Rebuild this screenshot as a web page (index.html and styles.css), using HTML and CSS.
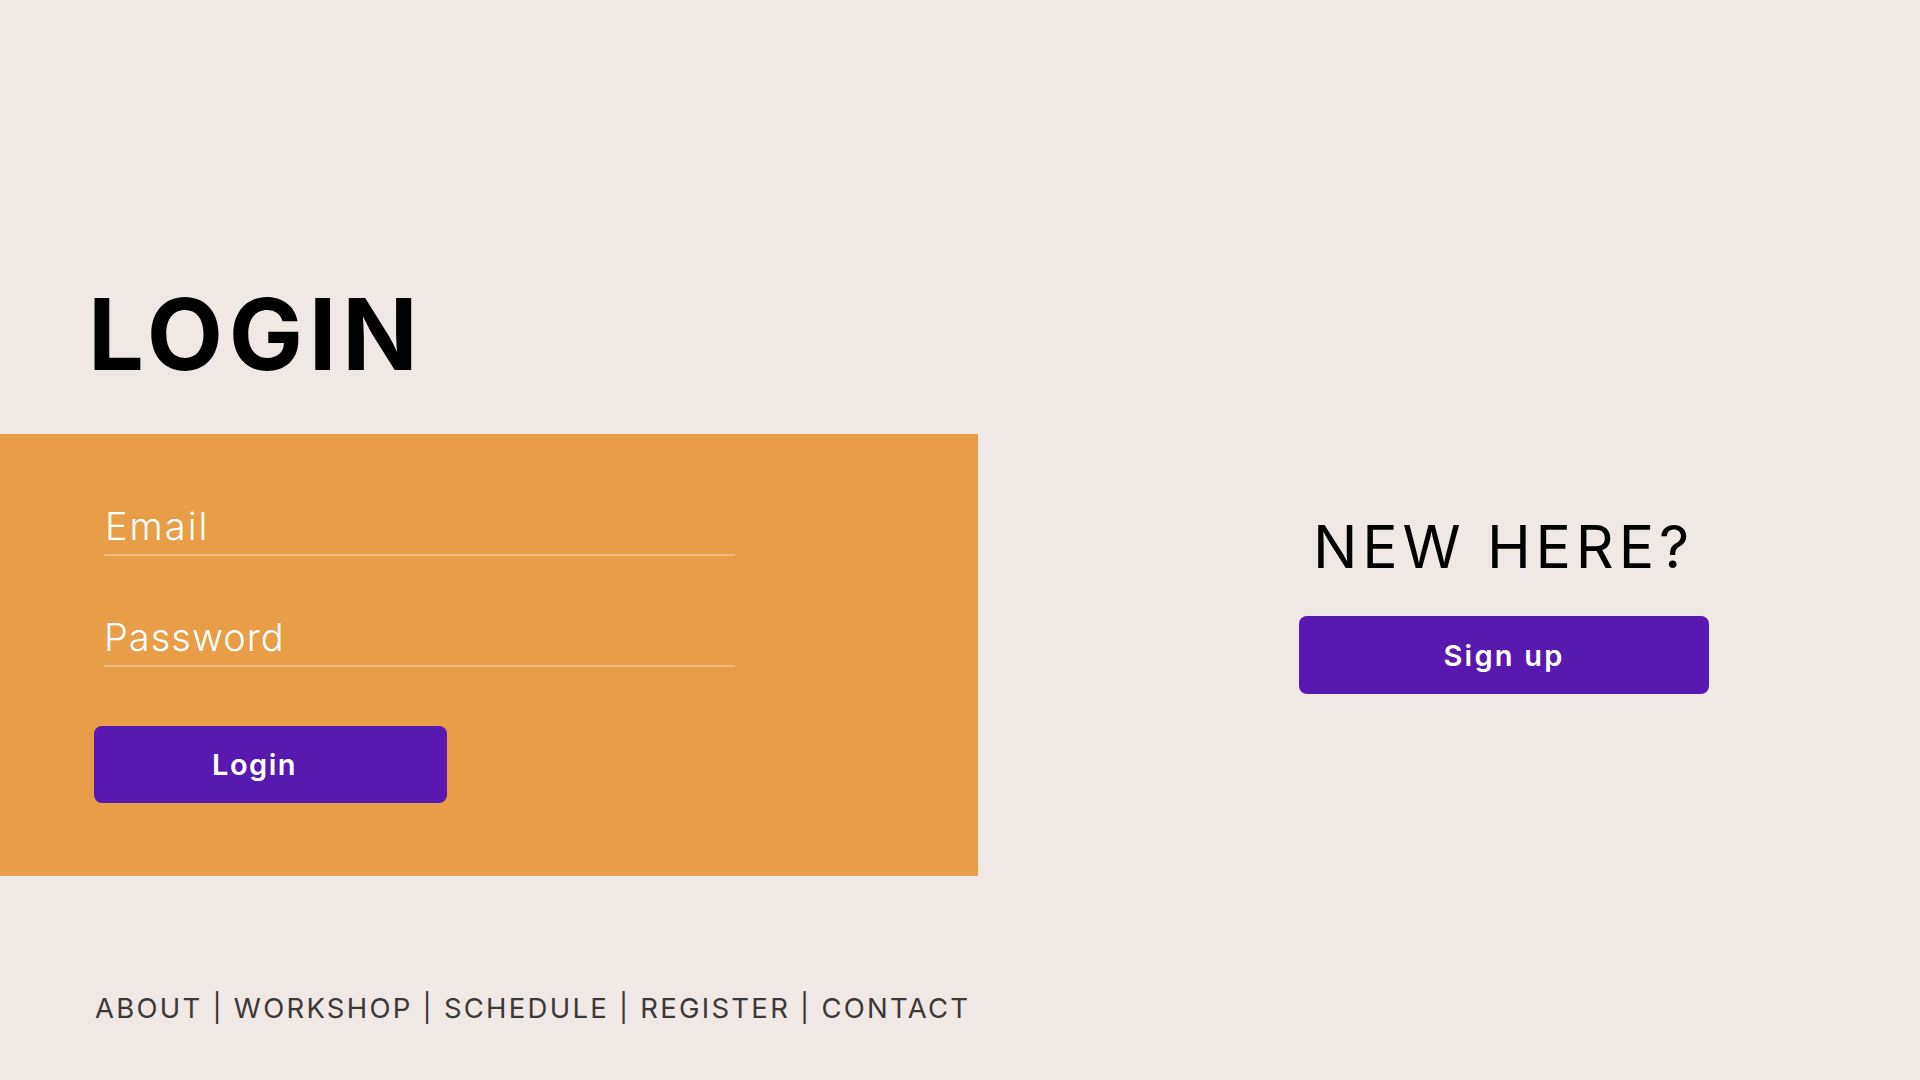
FILE: index.html
```html
<!DOCTYPE html>
<html lang="en">
<head>
<meta charset="utf-8">
<title>Login</title>
<link rel="stylesheet" href="styles.css">
</head>
<body>
<div class="page">
  <header class="header">
    <h1 class="title">LOGIN</h1>
  </header>
  <main class="main">
    <form class="panel">
      <input class="field field-email" type="text" placeholder="Email">
      <input class="field field-password" type="password" placeholder="Password">
      <button class="btn btn-login" type="button">Login</button>
    </form>
    <section class="aside">
      <h2 class="new-here">NEW HERE?</h2>
      <button class="btn btn-signup" type="button">Sign up</button>
    </section>
  </main>
  <footer class="footer">
    <nav class="nav">ABOUT | WORKSHOP | SCHEDULE | REGISTER | CONTACT</nav>
  </footer>
</div>
</body>
</html>
```
FILE: styles.css
```css
* { box-sizing: border-box; }
html, body { margin: 0; padding: 0; }
body {
  background: #f0e8e5;
  font-family: Inter, "Liberation Sans", sans-serif;
  color: #000;
}
.page {
  width: 1920px;
  height: 1080px;
  display: flex;
  flex-direction: column;
}
.header {
  height: 434px;
  display: flex;
  align-items: flex-start;
  padding: 284px 0 0 88px;
}
.title {
  margin: 0;
  font-size: 99px;
  line-height: 100px;
  font-weight: 700;
  letter-spacing: 5.7px;
}
.main {
  height: 442px;
  display: flex;
}
.panel {
  width: 978px;
  background: #e89d47;
  display: flex;
  flex-direction: column;
  align-items: flex-start;
  padding: 66px 0 0 104px;
}
.field {
  width: 631px;
  height: 56px;
  background: transparent;
  border: none;
  border-bottom: 2px solid rgba(255, 255, 255, 0.3);
  outline: none;
  padding: 0 0 3px 1px;
  font-family: inherit;
  font-size: 38px;
  font-weight: 300;
  color: #fff;
  letter-spacing: 1.4px;
}
.field::placeholder { color: #fff; opacity: 1; }
.field-email { letter-spacing: 2px; }
.field-password { margin-top: 55px; padding-left: 0; letter-spacing: 1px; }
.btn {
  border: none;
  background: #5819b0;
  color: #fff;
  font-family: inherit;
  font-weight: 600;
  font-size: 29px;
  border-radius: 8px;
  cursor: pointer;
  letter-spacing: 1.5px;
}
.btn-login {
  margin: 59px 0 0 -10px;
  width: 353px;
  height: 77px;
  padding: 0 32px 0 0;
}
.aside {
  margin-left: 321px;
  width: 410px;
  display: flex;
  flex-direction: column;
  align-items: center;
  padding-top: 78px;
}
.new-here {
  margin: 0;
  font-size: 59px;
  line-height: 70px;
  font-weight: 400;
  letter-spacing: 4.8px;
  padding-right: 1px;
}
.btn-signup {
  margin-top: 34px;
  width: 410px;
  height: 78px;
  letter-spacing: 2.2px;
}
.footer {
  flex: 1;
  padding: 115px 0 0 95px;
}
.nav {
  font-size: 27.5px;
  line-height: 34px;
  color: #3b3838;
  letter-spacing: 2.25px;
}
```
